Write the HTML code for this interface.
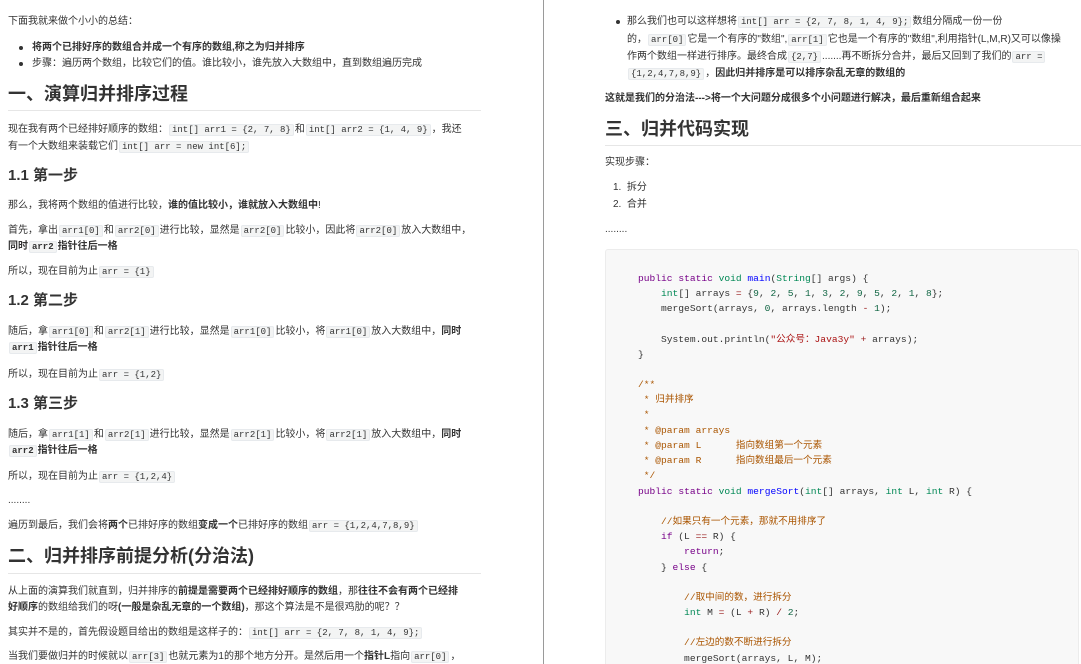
<!DOCTYPE html>
<html><head><meta charset="utf-8">
<style>
html,body{margin:0;padding:0;background:#fff;width:1081px;height:664px;overflow:hidden}
body{font-family:"Liberation Sans","Noto Sans CJK SC",sans-serif;color:#333;font-size:10px;position:relative}
.l{position:absolute;white-space:nowrap;line-height:14px}
c{font-family:"Liberation Mono",monospace;font-size:9px;background:#f3f4f4;border:1px solid #e7eaed;border-radius:2px;padding:0 2px;margin:0 1px;color:#333}
b{font-weight:bold}
.h1{font-size:18px;font-weight:bold;line-height:24px;color:#333}
.h2{font-size:15px;font-weight:bold;line-height:20px;color:#333}
.rule{position:absolute;height:1px;background:#e6e6e6}
.dot{position:absolute;width:4px;height:4px;border-radius:50%;background:#333}
.code{position:absolute;left:605px;top:249px;width:472px;height:420px;background:#f8f8f8;border:1px solid #ececec;border-radius:3px}
.cl{position:absolute;left:638px;white-space:pre;font-family:"Liberation Mono","Noto Sans CJK SC",monospace;font-size:9.6px;line-height:14px;color:#333}
.k{color:#770088}.t{color:#008855}.f{color:#0000ff}.cm{color:#aa5500}.s{color:#aa1111}.o{color:#981a1a}.n{color:#116644}
</style></head><body>
<div style="position:absolute;left:543px;top:0;width:1px;height:664px;background:#9a9a9a"></div>

<div class="l" style="left:8px;top:15px">下面我就来做个小小的总结：</div>
<div class="dot" style="left:19px;top:46px"></div>
<div class="l" style="left:32px;top:41px"><b>将两个已排好序的数组合并成一个有序的数组,称之为归并排序</b></div>
<div class="dot" style="left:19px;top:62px"></div>
<div class="l" style="left:32px;top:57px">步骤：遍历两个数组，比较它们的值。谁比较小，谁先放入大数组中，直到数组遍历完成</div>
<div class="l h1" style="left:8px;top:82px">一、演算归并排序过程</div>
<div class="rule" style="left:8px;top:110px;width:473px"></div>
<div class="l" style="left:8px;top:123px">现在我有两个已经排好顺序的数组：<c>int[] arr1 = {2, 7, 8}</c>和<c>int[] arr2 = {1, 4, 9}</c>，我还</div>
<div class="l" style="left:8px;top:140px">有一个大数组来装载它们<c>int[] arr = new int[6];</c></div>
<div class="l h2" style="left:8px;top:166px">1.1 第一步</div>
<div class="l" style="left:8px;top:199px">那么，我将两个数组的值进行比较，<b>谁的值比较小，谁就放入大数组中</b>!</div>
<div class="l" style="left:8px;top:224px">首先，拿出<c>arr1[0]</c>和<c>arr2[0]</c>进行比较，显然是<c>arr2[0]</c>比较小，因此将<c>arr2[0]</c>放入大数组中，</div>
<div class="l" style="left:8px;top:240px"><b>同时<c>arr2</c>指针往后一格</b></div>
<div class="l" style="left:8px;top:265px">所以，现在目前为止<c>arr = {1}</c></div>
<div class="l h2" style="left:8px;top:291px">1.2 第二步</div>
<div class="l" style="left:8px;top:325px">随后，拿<c>arr1[0]</c>和<c>arr2[1]</c>进行比较，显然是<c>arr1[0]</c>比较小，将<c>arr1[0]</c>放入大数组中，<b>同时</b></div>
<div class="l" style="left:8px;top:341px"><b><c>arr1</c>指针往后一格</b></div>
<div class="l" style="left:8px;top:368px">所以，现在目前为止<c>arr = {1,2}</c></div>
<div class="l h2" style="left:8px;top:394px">1.3 第三步</div>
<div class="l" style="left:8px;top:428px">随后，拿<c>arr1[1]</c>和<c>arr2[1]</c>进行比较，显然是<c>arr2[1]</c>比较小，将<c>arr2[1]</c>放入大数组中，<b>同时</b></div>
<div class="l" style="left:8px;top:444px"><b><c>arr2</c>指针往后一格</b></div>
<div class="l" style="left:8px;top:470px">所以，现在目前为止<c>arr = {1,2,4}</c></div>
<div class="l" style="left:8px;top:494px">........</div>
<div class="l" style="left:8px;top:519px">遍历到最后，我们会将<b>两个</b>已排好序的数组<b>变成一个</b>已排好序的数组<c>arr = {1,2,4,7,8,9}</c></div>
<div class="l h1" style="left:8px;top:544px">二、归并排序前提分析(分治法)</div>
<div class="rule" style="left:8px;top:573px;width:473px"></div>
<div class="l" style="left:8px;top:585px">从上面的演算我们就直到，归并排序的<b>前提是需要两个已经排好顺序的数组</b>，那<b>往往不会有两个已经排</b></div>
<div class="l" style="left:8px;top:601px"><b>好顺序</b>的数组给我们的呀<b>(一般是杂乱无章的一个数组)</b>，那这个算法是不是很鸡肋的呢？？</div>
<div class="l" style="left:8px;top:626px">其实并不是的，首先假设题目给出的数组是这样子的：<c>int[] arr = {2, 7, 8, 1, 4, 9};</c></div>
<div class="l" style="left:8px;top:650px">当我们要做归并的时候就以<c>arr[3]</c>也就元素为1的那个地方分开。是然后用一个<b>指针L</b>指向<c>arr[0]</c>，</div>

<div class="dot" style="left:616px;top:20px"></div>
<div class="l" style="left:627px;top:15px">那么我们也可以这样想将<c>int[] arr = {2, 7, 8, 1, 4, 9};</c>数组分隔成一份一份</div>
<div class="l" style="left:627px;top:33px">的，<c>arr[0]</c>它是一个有序的"数组",<c>arr[1]</c>它也是一个有序的"数组",利用指针(L,M,R)又可以像操</div>
<div class="l" style="left:627px;top:50px">作两个数组一样进行排序。最终合成<c>{2,7}</c>.......再不断拆分合并，最后又回到了我们的<c>arr =</c></div>
<div class="l" style="left:627px;top:67px"><c>{1,2,4,7,8,9}</c>，<b>因此归并排序是可以排序杂乱无章的数组的</b></div>
<div class="l" style="left:605px;top:92px"><b>这就是我们的分治法---&gt;将一个大问题分成很多个小问题进行解决，最后重新组合起来</b></div>
<div class="l h1" style="left:605px;top:117px">三、归并代码实现</div>
<div class="rule" style="left:605px;top:145px;width:476px"></div>
<div class="l" style="left:605px;top:156px">实现步骤：</div>
<div class="l" style="left:613px;top:181px">1.&nbsp; 拆分</div>
<div class="l" style="left:613px;top:198px">2.&nbsp; 合并</div>
<div class="l" style="left:605px;top:223px">........</div>

<div class="code"></div>
<div class="cl" style="top:272px"><span class="k">public</span> <span class="k">static</span> <span class="t">void</span> <span class="f">main</span>(<span class="t">String</span>[] args) {</div>
<div class="cl" style="top:287px">    <span class="t">int</span>[] arrays <span class="o">=</span> {<span class="n">9</span>, <span class="n">2</span>, <span class="n">5</span>, <span class="n">1</span>, <span class="n">3</span>, <span class="n">2</span>, <span class="n">9</span>, <span class="n">5</span>, <span class="n">2</span>, <span class="n">1</span>, <span class="n">8</span>};</div>
<div class="cl" style="top:302px">    mergeSort(arrays, <span class="n">0</span>, arrays.length <span class="o">-</span> <span class="n">1</span>);</div>
<div class="cl" style="top:333px">    System.out.println(<span class="s">"公众号：Java3y"</span> <span class="o">+</span> arrays);</div>
<div class="cl" style="top:348px">}</div>
<div class="cl cm" style="top:378px">/**</div>
<div class="cl cm" style="top:393px"> * 归并排序</div>
<div class="cl cm" style="top:408px"> *</div>
<div class="cl cm" style="top:424px"> * @param arrays</div>
<div class="cl cm" style="top:439px"> * @param L      指向数组第一个元素</div>
<div class="cl cm" style="top:454px"> * @param R      指向数组最后一个元素</div>
<div class="cl cm" style="top:469px"> */</div>
<div class="cl" style="top:485px"><span class="k">public</span> <span class="k">static</span> <span class="t">void</span> <span class="f">mergeSort</span>(<span class="t">int</span>[] arrays, <span class="t">int</span> L, <span class="t">int</span> R) {</div>
<div class="cl cm" style="top:515px">    //如果只有一个元素，那就不用排序了</div>
<div class="cl" style="top:530px">    <span class="k">if</span> (L <span class="o">==</span> R) {</div>
<div class="cl" style="top:545px">        <span class="k">return</span>;</div>
<div class="cl" style="top:561px">    } <span class="k">else</span> {</div>
<div class="cl cm" style="top:591px">        //取中间的数，进行拆分</div>
<div class="cl" style="top:606px">        <span class="t">int</span> M <span class="o">=</span> (L <span class="o">+</span> R) <span class="o">/</span> <span class="n">2</span>;</div>
<div class="cl cm" style="top:636px">        //左边的数不断进行拆分</div>
<div class="cl" style="top:652px">        mergeSort(arrays, L, M);</div>
</body></html>
